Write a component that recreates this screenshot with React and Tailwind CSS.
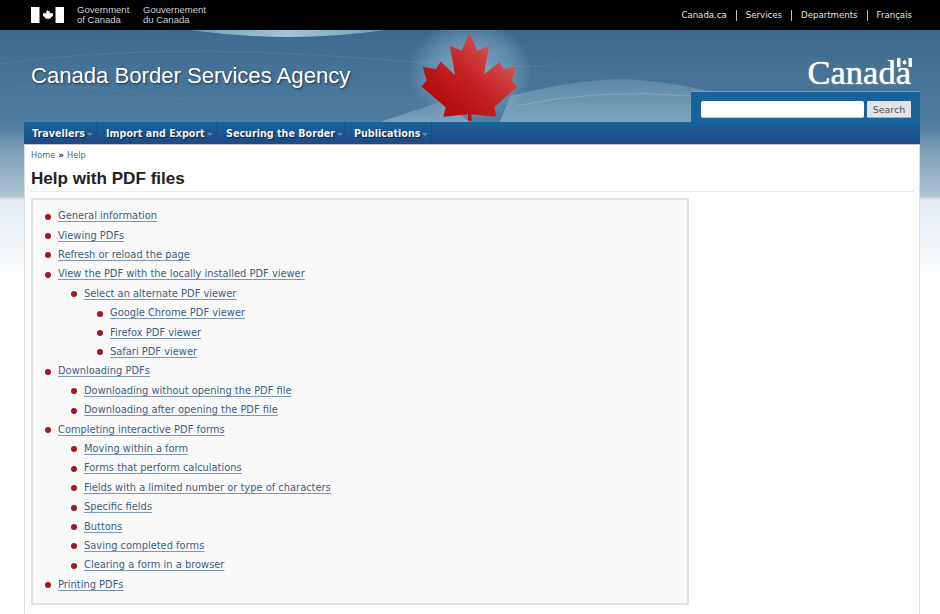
import React from "react";

const sans = "font-['Liberation_Sans',Arial,sans-serif]";
const dejavu = "font-['DejaVu_Sans',Verdana,sans-serif]";

const topLinks = ["Canada.ca", "Services", "Departments", "Français"];
const navItems = [
  ["Travellers", "w-[74px]"],
  ["Import and Export", "w-[120px]"],
  ["Securing the Border", "w-[128px]"],
  ["Publications", "w-[86px]"],
];

const toc = [
  [0, "General information"],
  [0, "Viewing PDFs"],
  [0, "Refresh or reload the page"],
  [0, "View the PDF with the locally installed PDF viewer"],
  [1, "Select an alternate PDF viewer"],
  [2, "Google Chrome PDF viewer"],
  [2, "Firefox PDF viewer"],
  [2, "Safari PDF viewer"],
  [0, "Downloading PDFs"],
  [1, "Downloading without opening the PDF file"],
  [1, "Downloading after opening the PDF file"],
  [0, "Completing interactive PDF forms"],
  [1, "Moving within a form"],
  [1, "Forms that perform calculations"],
  [1, "Fields with a limited number or type of characters"],
  [1, "Specific fields"],
  [1, "Buttons"],
  [1, "Saving completed forms"],
  [1, "Clearing a form in a browser"],
  [0, "Printing PDFs"],
];

const Flag = ({ className }) => (
  <svg viewBox="0 0 33 16" className={className} fill="#fff">
    <rect x="0" y="0" width="8.500" height="16" />
    <rect x="24.500" y="0" width="8.500" height="16" />
    <path d="M16.500 2.500l1.300 2.200 1.200-.6-.5 3 1.600-1.500.4.9 1.800-.3-.6 1.900.7.4-2.800 2.300.3 1-2.700-.4v2h-.4v-2l-2.700.4.3-1-2.800-2.300.7-.4-.6-1.900 1.800.3.4-.9 1.600 1.500-.5-3 1.200.6z" />
  </svg>
);

const BannerArt = () => (
  <svg viewBox="0 0 940 92" className="absolute inset-0 w-full h-full" aria-hidden="true">
    <defs>
      <linearGradient id="leaf" x1="0.85" y1="0.1" x2="0.2" y2="0.75">
        <stop offset="0" stopColor="#d95f60" />
        <stop offset="0.55" stopColor="#c42527" />
        <stop offset="1" stopColor="#b70d0e" />
      </linearGradient>
      <radialGradient id="glow">
        <stop offset="0" stopColor="#9cc6dc" stopOpacity="0.7" />
        <stop offset="0.7" stopColor="#9cc6dc" stopOpacity="0.3" />
        <stop offset="1" stopColor="#9cc6dc" stopOpacity="0" />
      </radialGradient>
      <linearGradient id="arc" x1="0" x2="1" y1="0" y2="0">
        <stop offset="0" stopColor="#6f9dbb" />
        <stop offset="0.5" stopColor="#a3c6da" />
        <stop offset="1" stopColor="#6f9dbb" />
      </linearGradient>
      <linearGradient id="wave" x1="0" x2="0" y1="0" y2="1">
        <stop offset="0" stopColor="#8fb5cc" stopOpacity="0.3" />
        <stop offset="1" stopColor="#8fb5cc" stopOpacity="0.7" />
      </linearGradient>
    </defs>
    <path d="M190 0 Q290 14 385 0 Z" fill="url(#arc)" />
    <path d="M0 34 Q150 12 360 28 T560 30" fill="none" stroke="#ffffff" strokeOpacity="0.07" />
    <path d="M0 60 Q60 50 190 70" fill="none" stroke="#ffffff" strokeOpacity="0.05" />
    <path d="M380 92 Q410 82 440 72 L470 92 Z" fill="url(#wave)" />
    <path d="M510 66 Q590 46 640 50 Q675 53 712 62 L691 92 L500 92 Z" fill="url(#wave)" />
    <path d="M515 76 Q600 58 690 66" fill="none" stroke="#fff" strokeOpacity="0.18" />
    <ellipse cx="470" cy="42" rx="62" ry="52" fill="url(#glow)" />
    <g transform="translate(400 -10) scale(0.3333)">
      <path
        d="M208 38 L232 92 L267 78 L252 163 L298 127 L312 148 L350 140 L335 180 L352 200 L283 262 L289 290 L215 283 L215 302 L204 302 L204 283 L130 290 L137 262 L65 200 L80 180 L68 140 L108 148 L122 125 L165 165 L150 78 L185 92 Z"
        fill="url(#leaf)"
      />
    </g>
  </svg>
);

export default function App() {
  return (
    <div className={`h-[614px] overflow-hidden bg-[linear-gradient(180deg,#3f6a8e_30px,#4f7c9f_125px,#7a9db6_150px,#afc4d2_196px,#e3ecf2_200px,#ffffff_285px)] ${sans}`}>
      <header className="h-[30px] bg-black flex items-center justify-between pl-[31px] pr-[28px]">
        <div className="flex items-center">
          <Flag className="w-[33px] h-[16px]" />
          <div className="ml-[13px] w-[66px] text-[9.5px] leading-[10px] text-[#cfcfcf]">
            Government
            <br />
            of Canada
          </div>
          <div className="text-[9.5px] leading-[10px] text-[#cfcfcf]">
            Gouvernement
            <br />
            du Canada
          </div>
        </div>
        <nav className={`flex items-center text-[8.6px] font-medium text-[#e4e4e4] ${dejavu}`}>
          {topLinks.map((t, i) => (
            <span key={t} className={i ? "border-l border-[#bbbbbb] ml-[9px] pl-[9px] leading-[11px]" : "leading-[11px]"}>
              {t}
            </span>
          ))}
        </nav>
      </header>

      <div className="relative h-[92px] flex justify-between">
        <BannerArt />
        <h1 className="relative pl-[31px] pt-[31px] text-[22.1px] leading-[30px] text-white [text-shadow:1px_1px_2px_#1c3550]">
          Canada Border Services Agency
        </h1>
        <div className="relative mr-[20px] w-[229px] flex flex-col items-end justify-end">
          <div className="relative pr-[9px] leading-none">
            <span className="block font-['Liberation_Serif',serif] text-[34.5px] leading-[30px] text-white [text-shadow:0_0_1px_#ffffff]">Canada</span>
            <svg viewBox="0 0 15 9" className="absolute right-[8px] top-[1px] w-[15px] h-[9px]" fill="#fff">
              <rect x="0" y="0" width="3.500" height="9" />
              <rect x="11.500" y="0" width="3.500" height="9" />
              <path d="M7.500 1.500l1 1.800 1-.3-.5 2 .6.5-2.100 1.300-2.100-1.300.6-.5-.5-2 1 .3z" />
            </svg>
          </div>
          <div className="mt-[4px] w-full h-[31px] pl-[10px] pr-[9px] pt-[9px] flex items-start justify-between bg-[#19639b] border-t border-[#6fa3c4]">
            <input type="text" className="w-[163px] h-[17px] bg-white rounded-[2px] border-b border-[#c8c8c8]" />
            <button className={`w-[44px] h-[17px] pt-[1px] rounded-[1px] bg-[#e3e3e3] border-b border-[#aaaaaa] text-[9.500px] leading-none text-[#555555] ${dejavu}`}>
              Search
            </button>
          </div>
        </div>
      </div>

      <div className="mx-[24px] w-[896px] flex flex-col">
        <nav className={`shrink-0 h-[22px] box-content flex bg-[linear-gradient(180deg,#19639b,#1f4a85)] border-b border-[#c4c8cc] text-[9.6px] font-bold text-[#eef3f8] whitespace-nowrap ${dejavu}`}>
          {navItems.map(([item, width]) => (
            <div key={item} className={`${width} flex items-center pl-[8px] pt-[2px] border-r border-[#1a4a7f]`}>
              <span className="[text-shadow:1px_1px_1px_#123]">{item}</span>
              <span className="ml-[2px] mt-[1px] w-0 h-0 border-x-[3px] border-x-transparent border-t-[3px] border-t-[#5b86b0]" />
            </div>
          ))}
        </nav>

        <main className="h-[470px] bg-white border-x border-[#dddddd] pl-[6px] pr-[6px]">
          <div className={`pt-[4px] flex items-center text-[8.2px] leading-[12px] text-[#4b6a86] ${dejavu}`}>
            <span>Home</span>
            <span className="mx-[3px] text-[#333333] text-[9px] font-bold">»</span>
            <span>Help</span>
          </div>
          <h2 className="mt-[6px] text-[17.1px] leading-[24px] font-bold text-[#222222] border-b border-dotted border-[#d5d5d5]">
            Help with PDF files
          </h2>
          <ul className={`mt-[6px] w-[658px] pt-[7px] pb-[8px] pl-[12px] bg-[#f9f9f9] border-2 border-[#e3e3e3] text-[9.9px] text-[#3d5f82] ${dejavu}`}>
            {toc.map(([level, text]) => (
              <li
                key={text}
                className={`h-[19.4px] flex items-center ${level === 1 ? "pl-[26px]" : level === 2 ? "pl-[52px]" : ""}`}
              >
                <span className="w-[6px] h-[6px] rounded-full bg-[#a01820] mr-[7px] shrink-0" />
                <a href="#" className="underline underline-offset-2 decoration-[#7d97ae]">
                  {text}
                </a>
              </li>
            ))}
          </ul>
        </main>
      </div>
    </div>
  );
}
